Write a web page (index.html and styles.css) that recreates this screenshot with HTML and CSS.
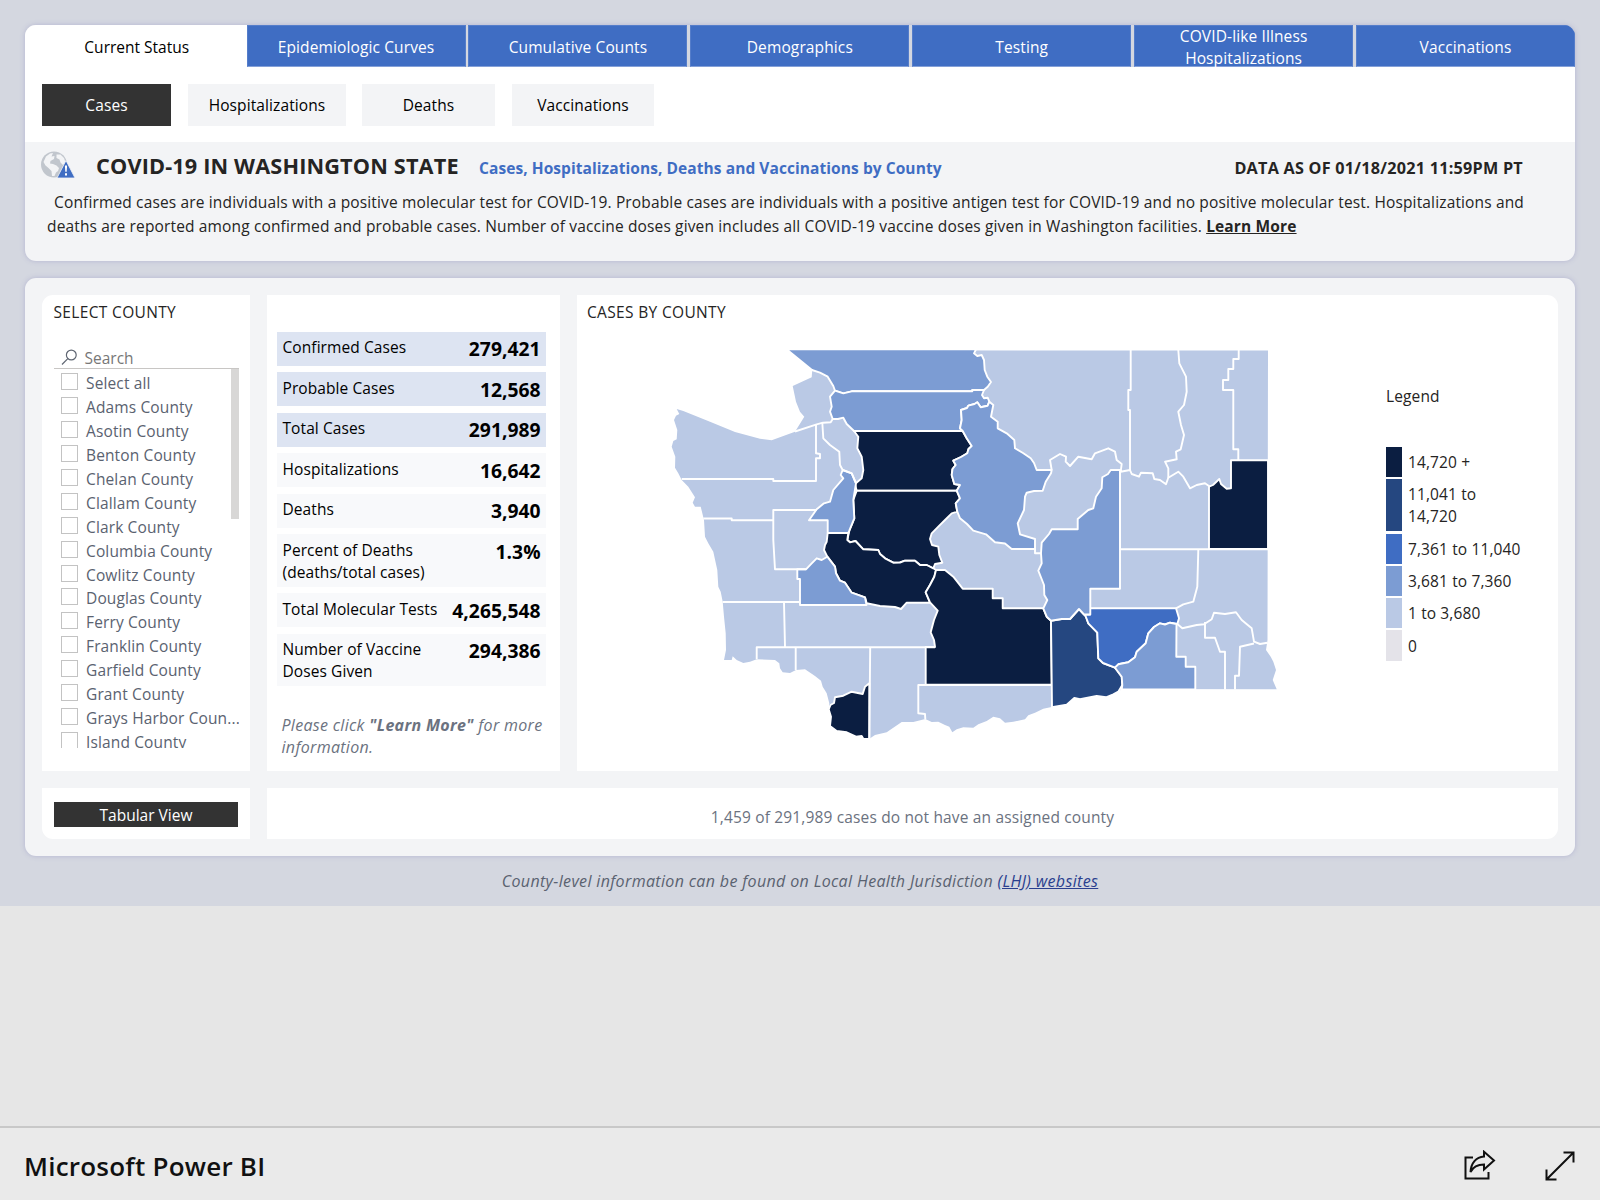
FILE: index.html
```html
<!DOCTYPE html>
<html lang="en">
<head>
<meta charset="utf-8">
<title>COVID-19 in Washington State</title>
<link rel="stylesheet" href="styles.css">
</head>
<body>
<main class="report">
  <section class="card intro">
    <nav class="tabs">
      <a class="tab active">Current Status</a>
      <a class="tab">Epidemiologic Curves</a>
      <a class="tab">Cumulative Counts</a>
      <a class="tab">Demographics</a>
      <a class="tab">Testing</a>
      <a class="tab">COVID-like Illness<br>Hospitalizations</a>
      <a class="tab">Vaccinations</a>
    </nav>
    <div class="subnav">
      <a class="pill cases">Cases</a>
      <a class="pill hosp">Hospitalizations</a>
      <a class="pill deaths">Deaths</a>
      <a class="pill vacc">Vaccinations</a>
    </div>
    <div class="headline">
      <svg class="globe" width="35" height="28" viewBox="0 0 35 28">
        <circle cx="13" cy="13.500" r="13" fill="#c1c6cd"/>
        <path d="M2.500 11L5 5.500 9 2.500 12 2 10.500 5.500 13.500 5 13 8 9.500 10 9 12.500 12 13 15.500 14.500 18 17 17 20 15 21.500 13.500 25 11 25 10.500 20 7.500 17 4.500 14.500zM15.500 3.500L19.500 3.500 23 7 24.500 11.500 22 14 19.500 11.500 18.500 8.500 15.500 7z" fill="#f3f4f6"/>
        <path d="M25 9.500L34 27H16z" fill="#3f6dc3" stroke="#f3f4f6" stroke-width=".8"/>
        <path d="M23.900 14.500h2.200l-.4 6.300h-1.400zM24 22.300h2v2.200h-2z" fill="#fff"/>
      </svg>
      <h1>COVID-19 IN WASHINGTON STATE</h1>
      <h2>Cases, Hospitalizations, Deaths and Vaccinations by County</h2>
      <strong class="asof">DATA AS OF 01/18/2021 11:59PM PT</strong>
    </div>
    <p class="about"><span class="line first">Confirmed cases are individuals with a positive molecular test for COVID-19. Probable cases are individuals with a positive antigen test for COVID-19 and no positive molecular test. Hospitalizations and</span>
    <span class="line">deaths are reported among confirmed and probable cases. Number of vaccine doses given includes all COVID-19 vaccine doses given in Washington facilities. <a class="more">Learn More</a></span></p>
  </section>

  <section class="card board">
    <div class="panel counties">
      <h3>SELECT COUNTY</h3>
      <div class="search">
        <svg width="17" height="17" viewBox="0 0 17 17" fill="none" stroke="#5f6672" stroke-width="1.200"><circle cx="10.300" cy="6" r="4.900"/><path d="M6.800 9.600L1 15.500"/></svg>
        <span>Search</span>
      </div>
      <div class="scroller">
        <ul class="list">
          <li><i></i>Select all</li>
          <li><i></i>Adams County</li>
          <li><i></i>Asotin County</li>
          <li><i></i>Benton County</li>
          <li><i></i>Chelan County</li>
          <li><i></i>Clallam County</li>
          <li><i></i>Clark County</li>
          <li><i></i>Columbia County</li>
          <li><i></i>Cowlitz County</li>
          <li><i></i>Douglas County</li>
          <li><i></i>Ferry County</li>
          <li><i></i>Franklin County</li>
          <li><i></i>Garfield County</li>
          <li><i></i>Grant County</li>
          <li><i></i>Grays Harbor Coun...</li>
          <li><i></i>Island County</li>
        </ul>
        <div class="thumb"></div>
      </div>
    </div>

    <div class="panel stats">
      <div class="stat blue"><span>Confirmed Cases</span><b>279,421</b></div>
      <div class="stat blue"><span>Probable Cases</span><b>12,568</b></div>
      <div class="stat blue"><span>Total Cases</span><b>291,989</b></div>
      <div class="stat"><span>Hospitalizations</span><b>16,642</b></div>
      <div class="stat"><span>Deaths</span><b>3,940</b></div>
      <div class="stat tall"><span>Percent of Deaths<br>(deaths/total cases)</span><b>1.3%</b></div>
      <div class="stat"><span>Total Molecular Tests</span><b>4,265,548</b></div>
      <div class="stat tall"><span>Number of Vaccine<br>Doses Given</span><b>294,386</b></div>
      <p class="hint">Please click <b>"Learn More"</b> for more<br>information.</p>
    </div>

    <div class="panel mapbox">
      <h3>CASES BY COUNTY</h3>
      <div class="mapwrap">
        <svg class="map" width="630" height="410" viewBox="660 340 630 410">
          <path class="c1" d="M790 350.300L1268 350.500 1267.500 640 1266 650 1270.700 656.700 1273.300 661.700 1276 670 1272.700 680 1276.700 689.300 1121.700 689 1118.300 691.700 1113.300 694.300 1106 697.300 1096.700 696 1090 697.700 1080 699.300 1074.300 698 1070 701 1066.700 704.700 1052.700 706.700 1043.300 708.700 1035 712.700 1028.300 715.300 1025 719.300 1013.300 721.700 1005 722.700 1000 718.300 993.300 716.700 986.700 721 978.300 724.300 973.300 727.700 963.300 727.300 956.700 729.300 952.300 732.300 949.300 726.700 945 725 938.300 721.700 931.700 722 925.300 719 913.300 722 901.700 722 893.300 727.700 886.700 732.300 875 735 869 739 863.300 738.700 861.700 736 856 736.700 846.700 732.300 836.700 731 830 726 831 716.700 828.700 709.300 829.300 703.300 826.700 693.300 822.700 686.700 821 680.700 815 676 805 669.300 796 670 790 673 782.700 672.300 780 668.300 779.300 663.300 775 660 756.700 659.300 750 661.700 743.300 663 736.700 660 732.700 656.300 731.700 660 724 660 726 650 725.700 633.300 724 616.700 722.700 601.700 720.700 591.700 718.300 586.700 717.300 570 713.300 551.700 708.300 543.300 705 536.700 704 520 700.700 506.700 695 506.700 692.700 502.700 695 497.300 688.300 486.700 681.700 480 678.300 473.300 675 467.700 675.300 456.700 671.700 446.700 673.300 441 676.700 439.300 677.300 430 674 420 676 415.700 679.300 414 676.700 409 683.300 411 710 421.700 735 432 760 438.700 771.700 440.300 795 431.700 804.300 416.700 800 411.700 796 401.700 792.700 386 811.700 377.300 812.300 369.300z"/>

          <g class="edge">
            <path class="c2" d="M786.500 349.300H976L974 353.300 977.300 356 981.700 355 984 360 984.700 370 987.300 376.700 991 382 987.700 386.700 984 390H972.300V391.300H851.700L843.300 393.300 835 390.700 833.300 386 827.700 376.700 820 372.700 812 370z"/>
            <path class="c2" d="M984 390L982 395 984 398.300 987.700 397.700 989.300 401.700 987.700 405.700 980.700 407.300 977.300 402.300 974.500 404 968.300 405.700 967 408 961 410 961.700 420 960 428.300 962.700 431H854L846.700 424 843.300 417.700 838 419 832.700 419 830 411.700 831.700 406.700 830 396.700 835 390.700 843.300 393.300 851.700 391.300H972.300V390z"/>
            <path class="c5" d="M854 431H962.700L966.700 438.300 971.700 446 968.500 449 967.300 453.300 961 457 953.300 460.700 955.700 465 952.500 469 951.700 475 954.300 484 960 485 956.700 490.700H856.700L855 484 861.700 478.300 863.300 470 861.700 456.700 857.300 448.300 858.300 436.700z"/>
            <path class="c5" d="M856.700 490.700H956.700L960 498.300 955.700 503.300 957.300 511.700 951.700 513.300 945 520 938.300 526.700 931.700 533.300 930 539 932 545 938.300 546.700 939.300 555 942.300 562.700 935 564 933.300 568.300 926.700 565 920 565 915 560.700 905 560.700 900 562.500 893.300 562.700 885 558.300 880 554 878.300 550 863.300 549.300 855.500 541 850 542.300 847.300 540 849.300 530.700 854.300 518.300 853.300 500z"/>
            <path class="c5" d="M848.300 533H827.700L826.700 541.700 825 545 824 550 827.300 556.700 835 566.700 836 573.300 840 580.700 845 582.700 851.700 592.700 865 597.300 866.700 603.300 880 606 895 607 901 609 906.700 602.700H930L925.700 592.300 930 585 934.300 576.700 936 570 933.300 568.300 926.700 565 920 565 915 560.700 905 560.700 900 562.500 893.300 562.700 885 558.300 880 554 878.300 550 863.300 549.300 855.500 541 850 542.300 847.300 540z"/>
            <path class="c2" d="M842.700 470L840.700 475 843.300 478.300 833.300 490 830 501.700 824 503.300 816.700 509.300 809 520.300H827.700V533H848.300L849.300 530.700 854.300 518.300 853.300 500 856 483.300 851.700 473.300z"/>
            <path class="c2" d="M797.300 569.300V579H800V605H866.500L865 597.300 851.700 592.700 845 582.700 840 580.700 836 573.300 835 566.700 827.300 556.700 821.700 560 816.700 558.300 811.700 563.300 806 569.300z"/>
            <path class="c5" d="M869.300 683.300L865 686.700 862.700 694 851.700 691.700 843.300 695.700 835 697.300 834 703 830.500 705 828.700 709.300 831 716.700 830 726 836.700 731 846.700 732.300 856 736.700 861.700 736 863.300 738.700 869.300 739z"/>
            <path class="c5" d="M936 570H945L953.300 576.700 962.700 588.700H992.700V598.300H1002.700V608.300H1043.300L1046.700 616.700 1051 620.700 1051.700 684.700H925.700V647H935L934 640 930.700 632.300 934 620 937.700 610.700 930 602.300 925.700 592.300 930 585 934.300 576.700z"/>
            <path class="c4" d="M1051 620.700L1061.700 619 1070 619 1079 609 1086 616.700 1088.300 623.300 1097.300 632.700 1098.300 658.300 1103 663 1115 667.700 1121.700 676.700 1122.300 685 1118.300 691.700 1113.300 694.300 1106 697.300 1096.700 696 1080 699.300 1074.300 698 1066.700 704.700 1052 707.300z"/>
            <path class="c3" d="M1085 614.500H1090V608.300H1176L1179 618.300 1177.300 624 1170 622.700 1165 624.500 1160 623.300 1154 627 1148.300 633.300 1145.700 643.300 1136.700 651.700 1135 657.300 1128.300 662.300 1118.300 664.300 1115 667.700 1103 663 1098.300 658.300 1097.300 632.700 1088.300 623.300z"/>
            <path class="c2" d="M1176.500 624L1170 622.700 1165 624.500 1160 623.300 1154 627 1148.300 633.300 1145.700 643.300 1136.700 651.700 1135 657.300 1128.300 662.300 1118.300 664.300 1115 667.700 1121.700 676.700 1122.300 685 1121.700 689.500H1195.300V666.700H1185.700V656.700H1176.300z"/>
            <path class="c2" d="M1120 470H1110.700L1108 474 1102.300 477.300 1101.700 488.300 1096 496.700 1093.300 508.300 1088.300 510 1077.700 519V529.300H1051.700L1049 534 1041.700 542.700 1041 553.300 1041.700 563.300 1038.300 570.700 1044 585 1044.300 595 1047.300 600 1043.300 608.300 1046.700 616.700 1051 620.700 1061.700 619 1070 619 1079 609 1084 614.500H1090.300V588.700H1120z"/>
            <path class="c2" d="M989.300 401.700L993.300 405 991 416.700 997.700 421.700 997.700 428.300 1006.700 433.300 1014.300 440 1015 448.300 1023 453 1030.700 458.300 1034 463 1036.700 470H1051.700L1051 473.300 1045.700 481.700 1042.700 490.700 1034 491 1026.700 492.700 1025 496.700 1024 510 1017.700 523.300 1020 534.300 1035 539V549H1011.700L1005 543.500 995 542.300 986 534.300 973.300 530.700 967 524 960 518.300 957.300 511.700 955.700 503.300 960 498.300 956.700 490.700 960 485 954.300 484 951.700 475 952.500 469 955.700 465 953.300 460.700 961 457 967.300 453.300 968.500 449 971.700 446 966.700 438.300 962.700 431 960 428.300 961.700 420 961 410 967 408 968.300 405.700 974.500 404 977.300 402.300 980.700 407.300 987.700 405.700z"/>
            <path class="c5" d="M1209 549V486.700L1213 485 1219.300 479 1221 484 1226.700 488.700 1231 488.300V460.300H1268V548.700z"/>
          </g>

          <g class="edge" fill="none">
            <path d="M795 431.500L816.700 424.300 823 422.700 830.700 422.300 832.700 419"/>
            <path d="M822.300 422.700L823.300 438.300 830 445 839.300 451.700 840 465 842.700 470 851.700 473.300 856 483.300"/>
            <path d="M816 425V453.300L820 454V458.300H816V481H773.300V479H681.700"/>
            <path d="M703.300 518.500H731.700V520.300H773.300M816.700 510H773.300V540L775 569.300H806"/>
            <path d="M722.700 602H799.300M784 602.700L785 647M756.700 659V647.300H935M795.700 647.300V670M870.200 647.300L869.300 739"/>
            <path d="M1051.700 685H918.300V713.300L925 714 925.300 719"/>
            <path d="M1051.700 470L1050 460 1060 454 1066 456.700 1065.700 461.700 1070 466 1078.300 456.700 1091.700 459.300 1095 453.300 1108.300 448.300 1115 451.700 1116.700 460 1121.700 464 1120.700 471.700 1130 470 1131.700 474 1139 476.700 1141 472.700 1152.700 473.300 1154.300 479 1160 480 1166 484.300 1168.300 477.700 1178.300 471.700 1183.300 476.700 1190 488.300 1196.700 485 1205 483.300 1210 486.700"/>
            <path d="M1130.700 350V390H1128.300V410H1130V470"/>
            <path d="M1178.300 350L1179.300 363.300 1186 376.700 1186.700 391.700 1184 405 1178.300 411.700 1181 425 1184 435 1180.700 449.300 1176 451.700 1176.700 459.300 1165 461.700 1168.300 468.300V477.700"/>
            <path d="M1238.700 350V359H1233.300V369H1228.300V380H1223V390H1233.300V449.300H1238.300V460"/>
            <path d="M1120 470V549.300H1268M1198.300 550L1197.300 586.700 1193.300 601.700 1183.300 604.300 1176 608.300"/>
            <path d="M1177.300 624L1182.300 628.300 1196.700 625 1204 624.300 1211.700 619.300 1214 612.700 1225 614 1236 612.300 1241.700 620 1251.700 628.300 1254 641.700 1260 644 1267.500 642.700"/>
            <path d="M1205 622V637.700H1215L1220 651.700H1225V689.500M1254 643.500L1240 646.700 1239 675.700H1235V689.500"/>
            <path d="M1035 549V553.300H1041"/>
          </g>
        </svg>
        <div class="legend">
          <h4>Legend</h4>
          <div class="key"><i class="k5"></i>14,720 +</div>
          <div class="key"><i class="k4"></i><span>11,041 to<br>14,720</span></div>
          <div class="key"><i class="k3"></i>7,361 to 11,040</div>
          <div class="key"><i class="k2"></i>3,681 to 7,360</div>
          <div class="key"><i class="k1"></i>1 to 3,680</div>
          <div class="key"><i class="k0"></i>0</div>
        </div>
      </div>
    </div>

    <div class="panel tabular"><a class="btn">Tabular View</a></div>
    <div class="panel unassigned">1,459 of 291,989 cases do not have an assigned county</div>
  </section>
  <p class="source">County-level information can be found on Local Health Jurisdiction <a>(LHJ) websites</a></p>
</main>
<footer class="bar">
  <span class="brand">Microsoft Power BI</span>
  <svg class="share" width="32" height="30" viewBox="0 0 32 30" fill="none" stroke="#111" stroke-width="2" stroke-linejoin="miter"><path d="M9 7.500H1.500V28.500H24.500V22"/><path d="M20 1.800L30 10.500 20 19.500V14.500C13 14.500 9 17 6.500 22 7 13 12 7 20 6.500z"/></svg>
  <svg class="expand" width="30" height="30" viewBox="0 0 30 30" fill="none" stroke="#111" stroke-width="2"><path d="M18.500 1.500H28.500V11.500M28.500 1.500L1.500 28.500M1.500 18.500V28.500H11.500"/></svg>
</footer>
</body>
</html>
```

FILE: styles.css
```css
* { box-sizing: border-box; }

body {
  margin: 0;
  width: 1600px;
  height: 1200px;
  overflow: hidden;
  display: flex;
  flex-direction: column;
  background: #e6e6e6;
  font-family: "Open Sans", "Noto Sans", sans-serif;
  font-size: 15.5px;
  line-height: 22px;
  color: #252423;
}

h1, h2, h3, h4, p, ul { margin: 0; padding: 0; font-weight: 400; font-size: inherit; }

.report {
  height: 906px;
  padding: 25px 25px 0;
  background: #d4d7e0;
}

.card {
  background: #f3f4f6;
  border-radius: 11px;
  box-shadow: 0 0 5px rgba(140, 140, 190, .45);
  overflow: hidden;
}

/* Top card */
.intro { height: 236px; }

.tabs {
  display: flex;
  gap: 2.800px;
  height: 42px;
  background: #d4d7e0;
}

.tab {
  flex: 1;
  display: flex;
  align-items: center;
  justify-content: center;
  padding-top: 1px;
  text-align: center;
  background: #3f6dc3;
  border: 1px solid #557dca;
  border-bottom-color: #84a0d8;
  color: #fff;
  letter-spacing: .12px;
}

.tab.active {
  flex: none;
  width: 221.500px;
  margin-right: -2.800px;
  padding: 2px 0 0 2px;
  background: #fff;
  border: 0;
  color: #000;
  letter-spacing: 0;
}

.subnav {
  display: flex;
  height: 75px;
  padding: 17px;
  background: #fff;
}

.pill {
  height: 42px;
  line-height: 42px;
  text-align: center;
  background: #f3f4f6;
  color: #000;
  letter-spacing: .1px;
}

.cases { width: 129px; margin-right: 17px; background: #333; color: #fff; }
.hosp { width: 158px; margin-right: 16px; }
.deaths { width: 133px; margin-right: 17px; }
.vacc { width: 142px; }

.headline {
  display: flex;
  height: 48px;
  padding: 9px 52px 0 16px;
  white-space: nowrap;
}

.headline h1 {
  width: 383px;
  margin-left: 20px;
  font-size: 21.700px;
  line-height: 30px;
  font-weight: 700;
  letter-spacing: .15px;
}

.headline h2 { font-weight: 700; color: #3f6dc3; line-height: 34px; letter-spacing: .07px; }
.asof { margin-left: auto; font-size: 16.200px; line-height: 34px; letter-spacing: .25px; }

.about { padding-left: 22px; line-height: 24px; letter-spacing: .148px; }
.line { display: block; white-space: nowrap; }
.first { padding-left: 7px; }
.more { font-weight: 700; text-decoration: underline; }

/* Dashboard card */
.board {
  height: 578px;
  margin-top: 17px;
  padding: 17px;
  display: grid;
  grid-template-columns: 208px 293px 981px;
  grid-template-rows: 476px 51px;
  gap: 17px;
}

.panel { background: #fff; }
.panel h3 { line-height: 22px; letter-spacing: .34px; }

.counties { border-top-left-radius: 11px; padding: 6px 11px 0 11.500px; }

.search {
  display: flex;
  gap: 6px;
  height: 34px;
  margin-top: 12px;
  padding: 12px 0 0 7px;
  border-bottom: 1px solid #c8c6c4;
  color: #777;
  line-height: 22px;
}

.search svg { margin-top: 2px; }
.search span { padding-left: 1px; }

.scroller {
  display: flex;
  justify-content: space-between;
  height: 379px;
  overflow: hidden;
}

.list { list-style: none; width: 178px; padding: 3px 0 0 7.500px; }

.list li {
  display: flex;
  gap: 8px;
  height: 23.940px;
  padding-top: 1px;
  line-height: 20px;
  white-space: nowrap;
  color: #5a6270;
  letter-spacing: .13px;
}

.list i { flex: none; width: 17px; height: 17px; border: 1px solid #c3c3c3; }
.thumb { flex: none; width: 8px; height: 150px; margin-left: -1px; background: #d8d7d6; }

.stats { padding: 36.500px 14px 0 10px; }

.stat {
  display: flex;
  justify-content: space-between;
  height: 34px;
  margin-bottom: 6.500px;
  padding: 4.500px 5.500px 0 5.500px;
  background: #f8f9fb;
  color: #000;
  white-space: nowrap;
  letter-spacing: .08px;
}

.stat b { font-size: 19.300px; line-height: 26px; letter-spacing: 0; }
.stat.blue { background: #dde4f2; }
.stat.tall { height: 52.500px; }

.hint {
  margin-top: 28px;
  padding-left: 4.500px;
  font-size: 16px;
  font-style: italic;
  letter-spacing: .31px;
  color: #6b7280;
  white-space: nowrap;
}

.mapbox { border-top-right-radius: 11px; padding: 6px 0 0 10px; }
.mapwrap { display: flex; }
.map { flex: none; margin: 17px 96px 0 73px; }
.c1 { fill: #bac9e5; }
.c2 { fill: #7c9cd3; }
.c3 { fill: #3f6dc3; }
.c4 { fill: #254780; }
.c5 { fill: #0b1e41; }
.edge path { stroke: #fff; stroke-width: 1.900px; stroke-linejoin: round; }

.legend { padding-top: 62px; white-space: nowrap; letter-spacing: .12px; }
.legend h4 { height: 61.500px; }
.key { display: flex; align-items: center; gap: 6px; min-height: 30.200px; margin-bottom: 2.100px; padding-top: 0; }
.key i { align-self: stretch; width: 16px; }
.key span { padding: 4.500px 0 4.200px; }
.k5 { background: #0b1e41; }
.k4 { background: #254780; }
.k3 { background: #3f6dc3; }
.k2 { background: #7c9cd3; }
.k1 { background: #bac9e5; }
.k0 { background: #e4e3e9; }

.tabular { border-bottom-left-radius: 11px; padding: 14px 12px; }

.btn {
  display: block;
  height: 25px;
  background: #333;
  color: #fff;
  text-align: center;
  line-height: 26px;
}

.unassigned {
  grid-column: span 2;
  border-bottom-right-radius: 11px;
  text-align: center;
  line-height: 58px;
  letter-spacing: .155px;
  color: #6b7280;
}

.source {
  padding-top: 14px;
  text-align: center;
  font-size: 16px;
  font-style: italic;
  letter-spacing: .35px;
  color: #5a6270;
}
.source a { color: #2a3f8f; text-decoration: underline; }

/* Bottom bar */
.bar {
  display: flex;
  align-items: center;
  height: 74px;
  margin-top: auto;
  padding: 4px 25px 0 24px;
  border-top: 2px solid #c8c8c8;
  background: #eaeaea;
}

.brand { margin-right: auto; font-size: 26px; font-weight: 600; letter-spacing: .23px; color: #111; }
.share { margin: 0 -1px 2px 0; }
.expand { margin-left: 50px; }
```
